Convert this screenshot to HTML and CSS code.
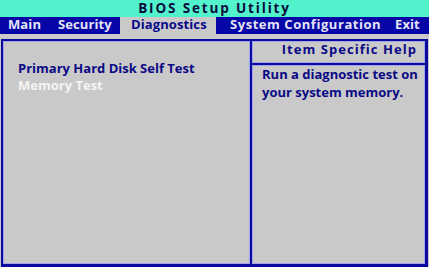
FILE: index.html
```html
<!DOCTYPE html>
<html>
<head>
<meta charset="utf-8">
<link rel="stylesheet" href="styles.css">
</head>
<body>
<div class="screen">
  <div class="title">BIOS Setup Utility</div>
  <div class="menu">
    <div class="item item-main">Main</div>
    <div class="item item-security">Security</div>
    <div class="item item-diag selected">Diagnostics</div>
    <div class="item item-sys">System Configuration</div>
    <div class="item item-exit">Exit</div>
  </div>
  <div class="work">
    <div class="box">
      <div class="pane left">
        <div class="entry">Primary Hard Disk Self Test</div>
        <div class="entry active">Memory Test</div>
      </div>
      <div class="pane right">
        <div class="help-head">Item Specific Help</div>
        <div class="help-body">Run a diagnostic test on<br>your system memory.</div>
      </div>
    </div>
  </div>
</div>
</body>
</html>
```
FILE: styles.css
```css
html, body {
  margin: 0;
  padding: 0;
}
body {
  width: 429px;
  height: 267px;
  overflow: hidden;
  background: #c9c9c9;
  font-family: "Open Sans", "DejaVu Sans", sans-serif;
  font-weight: 700;
  font-size: 13px;
}
.screen {
  display: flex;
  flex-direction: column;
  width: 429px;
  height: 267px;
}
.title {
  height: 17px;
  line-height: 17px;
  background: #52f3cc;
  color: #0c0c3c;
  text-align: center;
  font-size: 13.5px;
  letter-spacing: 1.85px;
}
.menu {
  display: flex;
  height: 17px;
  background: #0606a6;
  color: #e4e4f6;
}
.item {
  height: 15px;
  line-height: 15px;
  padding-bottom: 2px;
  letter-spacing: 0.1px;
  white-space: nowrap;
  box-sizing: content-box;
}
.item-main { width: 42px; padding-left: 8px; }
.item-security { width: 62px; padding-left: 8px; }
.item-diag { width: 85px; padding-left: 11px; }
.item-sys { width: 158px; padding-left: 14px; letter-spacing: 0.55px; }
.item-exit { width: 34px; padding-left: 7px; }
.selected {
  background: #c9c9c9;
  color: #0a0a8a;
}
.work {
  flex: 1;
  padding: 5px 1px 0 1px;
  display: flex;
  min-width: 0;
}
.box {
  flex: 1;
  min-width: 0;
  display: grid;
  grid-template-columns: 247px minmax(0, 1fr);
  border-style: solid;
  border-color: #0a0a9e;
  border-width: 2px 3px 3px 2px;
}
.pane {
  box-shadow: inset 0 0 0 1px #a4a4ec;
  min-width: 0;
}
.left {
  padding: 19px 0 0 15px;
  color: #0a0a86;
}
.entry {
  line-height: 17px;
}
.entry.active {
  color: #f4f4f4;
}
.right {
  border-left: 2px solid #0a0a9e;
  display: flex;
  flex-direction: column;
  color: #0a0a86;
}
.help-head {
  height: 16px;
  line-height: 16px;
  padding: 0 8px 6px 0;
  text-align: right;
  letter-spacing: 1.05px;
  border-bottom: 2px solid #0a0a9e;
  box-shadow: inset 0 0 0 1px #a4a4ec, 0 1px 0 0 #a4a4ec;
}
.help-body {
  flex: 1;
  padding: 0 0 0 10px;
  line-height: 18px;
  white-space: nowrap;
  box-shadow: inset 0 0 0 1px #a4a4ec;
}
```
